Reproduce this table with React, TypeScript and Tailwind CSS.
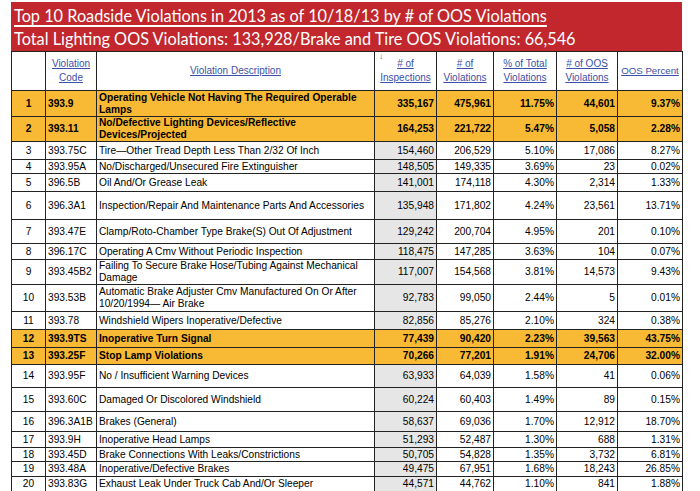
type Row = {
  rank: number;
  code: string;
  desc: string;
  insp: string;
  viol: string;
  pct: string;
  oos: string;
  oosPct: string;
  hot?: boolean;
  h: number;
};

const rows: Row[] = [
  { rank: 1, code: "393.9", desc: "Operating Vehicle Not Having The Required Operable Lamps", insp: "335,167", viol: "475,961", pct: "11.75%", oos: "44,601", oosPct: "9.37%", hot: true, h: 26 },
  { rank: 2, code: "393.11", desc: "No/Defective Lighting Devices/Reflective Devices/Projected", insp: "164,253", viol: "221,722", pct: "5.47%", oos: "5,058", oosPct: "2.28%", hot: true, h: 24 },
  { rank: 3, code: "393.75C", desc: "Tire\u2014Other Tread Depth Less Than 2/32 Of Inch", insp: "154,460", viol: "206,529", pct: "5.10%", oos: "17,086", oosPct: "8.27%", h: 18 },
  { rank: 4, code: "393.95A", desc: "No/Discharged/Unsecured Fire Extinguisher", insp: "148,505", viol: "149,335", pct: "3.69%", oos: "23", oosPct: "0.02%", h: 14 },
  { rank: 5, code: "396.5B", desc: "Oil And/Or Grease Leak", insp: "141,001", viol: "174,118", pct: "4.30%", oos: "2,314", oosPct: "1.33%", h: 18 },
  { rank: 6, code: "396.3A1", desc: "Inspection/Repair And Maintenance Parts And Accessories", insp: "135,948", viol: "171,802", pct: "4.24%", oos: "23,561", oosPct: "13.71%", h: 28 },
  { rank: 7, code: "393.47E", desc: "Clamp/Roto-Chamber Type Brake(S) Out Of Adjustment", insp: "129,242", viol: "200,704", pct: "4.95%", oos: "201", oosPct: "0.10%", h: 24 },
  { rank: 8, code: "396.17C", desc: "Operating A Cmv Without Periodic Inspection", insp: "118,475", viol: "147,285", pct: "3.63%", oos: "104", oosPct: "0.07%", h: 16 },
  { rank: 9, code: "393.45B2", desc: "Failing To Secure Brake Hose/Tubing Against Mechanical Damage", insp: "117,007", viol: "154,568", pct: "3.81%", oos: "14,573", oosPct: "9.43%", h: 25 },
  { rank: 10, code: "393.53B", desc: "Automatic Brake Adjuster Cmv Manufactured On Or After 10/20/1994\u2014 Air Brake", insp: "92,783", viol: "99,050", pct: "2.44%", oos: "5", oosPct: "0.01%", h: 27 },
  { rank: 11, code: "393.78", desc: "Windshield Wipers Inoperative/Defective", insp: "82,856", viol: "85,276", pct: "2.10%", oos: "324", oosPct: "0.38%", h: 18 },
  { rank: 12, code: "393.9TS", desc: "Inoperative Turn Signal", insp: "77,439", viol: "90,420", pct: "2.23%", oos: "39,563", oosPct: "43.75%", hot: true, h: 18 },
  { rank: 13, code: "393.25F", desc: "Stop Lamp Violations", insp: "70,266", viol: "77,201", pct: "1.91%", oos: "24,706", oosPct: "32.00%", hot: true, h: 17 },
  { rank: 14, code: "393.95F", desc: "No / Insufficient Warning Devices", insp: "63,933", viol: "64,039", pct: "1.58%", oos: "41", oosPct: "0.06%", h: 23 },
  { rank: 15, code: "393.60C", desc: "Damaged Or Discolored Windshield", insp: "60,224", viol: "60,403", pct: "1.49%", oos: "89", oosPct: "0.15%", h: 24 },
  { rank: 16, code: "396.3A1B", desc: "Brakes (General)", insp: "58,637", viol: "69,036", pct: "1.70%", oos: "12,912", oosPct: "18.70%", h: 20 },
  { rank: 17, code: "393.9H", desc: "Inoperative Head Lamps", insp: "51,293", viol: "52,487", pct: "1.30%", oos: "688", oosPct: "1.31%", h: 16 },
  { rank: 18, code: "393.45D", desc: "Brake Connections With Leaks/Constrictions", insp: "50,705", viol: "54,828", pct: "1.35%", oos: "3,732", oosPct: "6.81%", h: 14 },
  { rank: 19, code: "393.48A", desc: "Inoperative/Defective Brakes", insp: "49,475", viol: "67,951", pct: "1.68%", oos: "18,243", oosPct: "26.85%", h: 15 },
  { rank: 20, code: "393.83G", desc: "Exhaust Leak Under Truck Cab And/Or Sleeper", insp: "44,571", viol: "44,762", pct: "1.10%", oos: "841", oosPct: "1.88%", h: 15 },
];

const td = "border border-[#222] px-[2px] py-0 leading-[12px]";
const th = "border border-[#222] px-0 py-0 leading-[14px] font-normal text-center";
const link = "text-[#3b4fa8] underline";

export default function App() {
  return (
    <div className="w-[700px] h-[491px] bg-white overflow-hidden pt-[2px] pl-[11px]">
      <div className="w-[671px] h-[49px] bg-[#c1272d] text-white font-['Lato','Open_Sans',sans-serif] text-[16.3px] leading-[23px] pl-[3px] pt-[2px]">
        <div className="underline underline-offset-[3px] decoration-[1.5px]">
          Top 10 Roadside Violations in 2013 as of 10/18/13 by # of OOS Violations
        </div>
        <div>Total Lighting OOS Violations: 133,928/Brake and Tire OOS Violations: 66,546</div>
      </div>
      <table className="table-fixed border-collapse w-[671px] font-['Liberation_Sans',Arial,sans-serif] text-[10.2px] text-black">
        <colgroup>
          <col className="w-[34px]" />
          <col className="w-[51px]" />
          <col className="w-[278px]" />
          <col className="w-[62px]" />
          <col className="w-[57px]" />
          <col className="w-[63px]" />
          <col className="w-[61px]" />
          <col className="w-[65px]" />
        </colgroup>
        <thead>
          <tr className="h-[39px] text-[10px]">
            <th className={th}></th>
            <th className={th}>
              <span className={link}>
                Violation
                <br />
                Code
              </span>
            </th>
            <th className={th}>
              <span className={link}>Violation Description</span>
            </th>
            <th className={`${th} relative`}>
              <span className="absolute left-[4px] top-[1px] text-[8px] leading-[8px] text-[#555]">↓</span>
              <span className={link}>
                # of
                <br />
                Inspections
              </span>
            </th>
            <th className={th}>
              <span className={link}>
                # of
                <br />
                Violations
              </span>
            </th>
            <th className={th}>
              <span className={link}>
                % of Total
                <br />
                Violations
              </span>
            </th>
            <th className={th}>
              <span className={link}>
                # of OOS
                <br />
                Violations
              </span>
            </th>
            <th className={th}>
              <span className={`${link} whitespace-nowrap text-[9.7px]`}>OOS Percent</span>
            </th>
          </tr>
        </thead>
        <tbody>
          {rows.map((r) => (
            <tr
              key={r.rank}
              style={{ height: r.h }}
              className={r.hot ? "bg-[#f8b934] font-bold" : "bg-white"}
            >
              <td className={`${td} text-center`}>{r.rank}</td>
              <td className={td}>{r.code}</td>
              <td className={td}>{r.desc}</td>
              <td className={`${td} text-right ${r.hot ? "" : "bg-[#e6e6e6]"}`}>{r.insp}</td>
              <td className={`${td} text-right`}>{r.viol}</td>
              <td className={`${td} text-right`}>{r.pct}</td>
              <td className={`${td} text-right`}>{r.oos}</td>
              <td className={`${td} text-right`}>{r.oosPct}</td>
            </tr>
          ))}
        </tbody>
      </table>
    </div>
  );
}
